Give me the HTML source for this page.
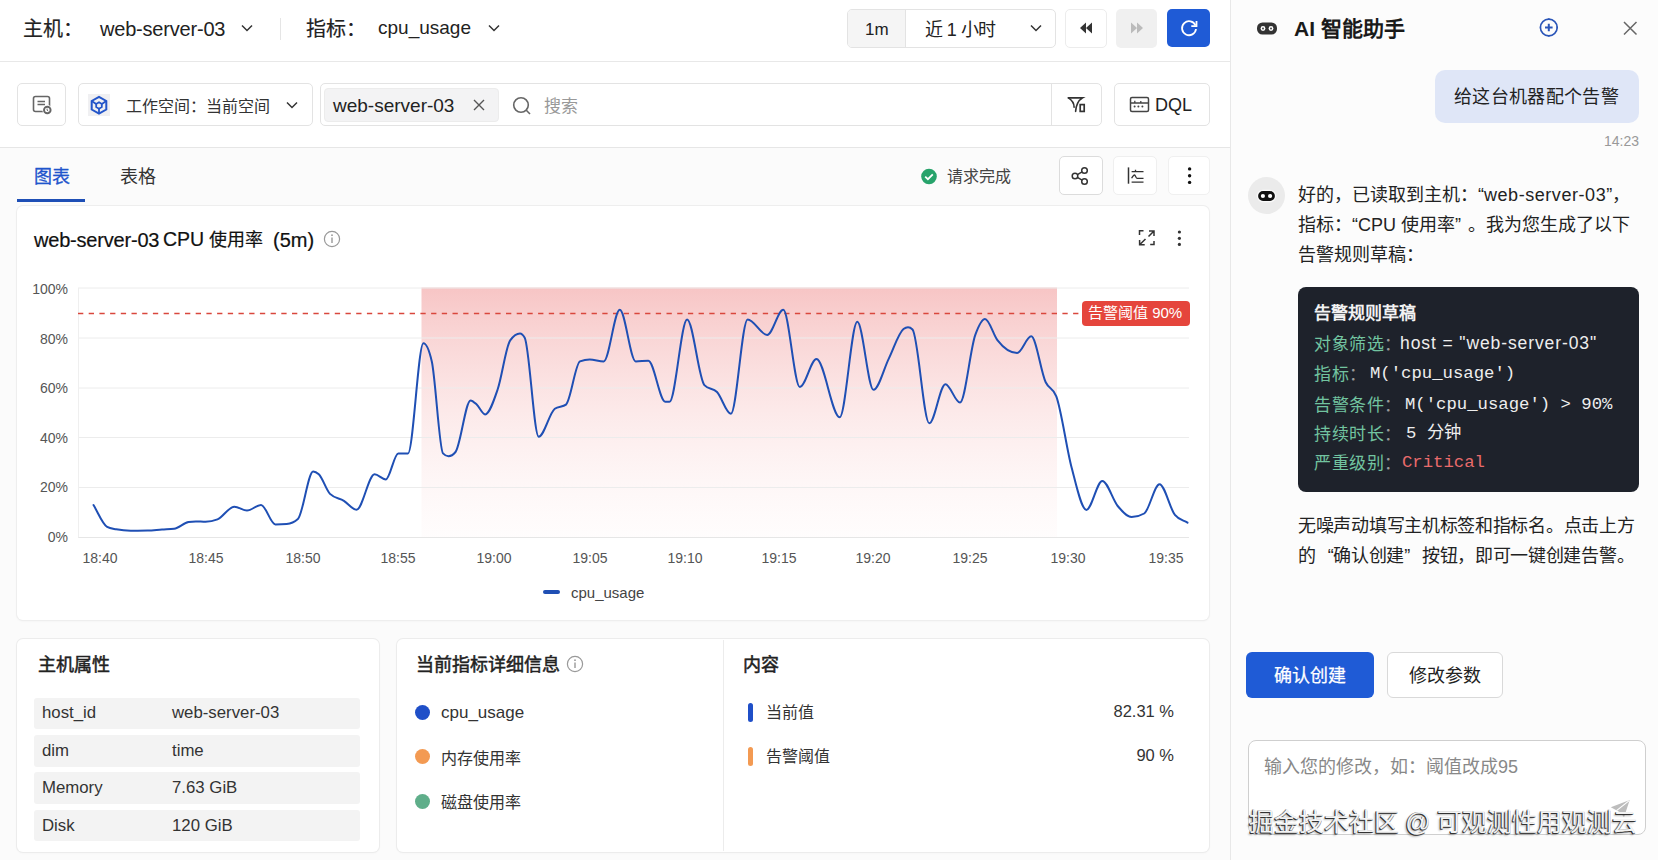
<!DOCTYPE html>
<html lang="zh-CN"><head><meta charset="utf-8">
<style>
*{box-sizing:border-box}
html,body{margin:0;padding:0}
body{width:1658px;height:860px;overflow:hidden;position:relative;background:#fbfbfb;font-family:"Liberation Sans",sans-serif;color:#222}
.a{position:absolute}
.t{position:absolute;white-space:nowrap;line-height:1}
.box{position:absolute;border:1px solid #e3e3e3;border-radius:5px;background:#fff}
svg{position:absolute;overflow:visible}
</style></head><body>
<!-- top bar -->
<div class="a" style="left:0;top:0;width:1230px;height:62px;background:#fff;border-bottom:1px solid #e8e8e8"></div>
<div class="t" style="left:23px;top:19px;font-size:20px;-webkit-text-stroke:0.2px #222;color:#222">主机：</div>
<div class="t" style="left:100px;top:19px;font-size:20px;letter-spacing:-0.2px;color:#222">web-server-03</div>
<svg style="left:240px;top:23px" width="14" height="10" viewBox="0 0 14 10"><path d="M2,2.5 L7,7.5 L12,2.5" fill="none" stroke="#333" stroke-width="1.5"/></svg>
<div class="a" style="left:280px;top:18px;width:1px;height:22px;background:#e5e5e5"></div>
<div class="t" style="left:306px;top:19px;font-size:20px;-webkit-text-stroke:0.2px #222;color:#222">指标：</div>
<div class="t" style="left:378px;top:18px;font-size:19px;color:#222">cpu_usage</div>
<svg style="left:487px;top:23px" width="14" height="10" viewBox="0 0 14 10"><path d="M2,2.5 L7,7.5 L12,2.5" fill="none" stroke="#333" stroke-width="1.5"/></svg>

<div class="box" style="left:847px;top:9px;width:209px;height:39px;border-radius:5px"></div>
<div class="a" style="left:848px;top:10px;width:58px;height:37px;background:#f5f5f5;border-right:1px solid #e3e3e3;border-radius:4px 0 0 4px"></div>
<div class="t" style="left:865px;top:21px;font-size:17px;color:#222">1m</div>
<div class="t" style="left:925px;top:21px;font-size:18px;letter-spacing:-0.6px;color:#222">近 1 小时</div>
<svg style="left:1029px;top:23px" width="14" height="10" viewBox="0 0 14 10"><path d="M2,2.5 L7,7.5 L12,2.5" fill="none" stroke="#333" stroke-width="1.5"/></svg>
<div class="box" style="left:1065px;top:9px;width:42px;height:39px;border-color:#ececec"></div>
<svg style="left:1078px;top:21px" width="16" height="14" viewBox="0 0 16 14"><path d="M8,1.5 L2,7 L8,12.5Z M14,1.5 L8,7 L14,12.5Z" fill="#333"/></svg>
<div class="a" style="left:1116px;top:9px;width:41px;height:39px;background:#f0f0f0;border-radius:5px"></div>
<svg style="left:1129px;top:21px" width="16" height="14" viewBox="0 0 16 14"><path d="M2,1.5 L8,7 L2,12.5Z M8,1.5 L14,7 L8,12.5Z" fill="#bbb"/></svg>
<div class="a" style="left:1167px;top:9px;width:43px;height:38px;background:#1f5bd6;border-radius:5px"></div>
<svg style="left:1178px;top:17px" width="22" height="22" viewBox="0 0 22 22"><path d="M17.5,8.5 A7,7 0 1 0 18,12" fill="none" stroke="#fff" stroke-width="1.8"/><path d="M18.5,4 L18.5,9.2 L13.3,9.2" fill="none" stroke="#fff" stroke-width="1.8"/></svg>

<!-- toolbar row -->
<div class="a" style="left:0;top:62px;width:1230px;height:86px;background:#fff;border-bottom:1px solid #e6e6e6"></div>
<div class="box" style="left:17px;top:83px;width:49px;height:43px"></div>
<svg style="left:30px;top:94px" width="24" height="22" viewBox="0 0 24 22"><rect x="3.5" y="2.5" width="16" height="15" rx="2" fill="none" stroke="#666" stroke-width="1.6"/><path d="M7.5,7.5 H15 M7.5,10.5 H15" stroke="#666" stroke-width="1.6"/><circle cx="17.3" cy="16" r="4.9" fill="#fff"/><circle cx="17.3" cy="16" r="3.3" fill="#fff" stroke="#666" stroke-width="1.9"/><path d="M17.1,14.6 V16.2 L18.3,17.2" fill="none" stroke="#666" stroke-width="1"/></svg>
<div class="box" style="left:78px;top:83px;width:235px;height:43px"></div>
<div class="a" style="left:88px;top:94px;width:22px;height:22px;background:#f0f0f2"></div>
<svg style="left:88px;top:94px" width="22" height="22" viewBox="0 0 22 22"><path d="M11,2.8 L18.3,7 L18.3,15.5 L11,19.7 L3.7,15.5 L3.7,7Z" fill="none" stroke="#2355c9" stroke-width="2"/><path d="M11,8.3 L13.8,9.9 L13.8,13.1 L11,14.7 L8.2,13.1 L8.2,9.9Z" fill="none" stroke="#2355c9" stroke-width="1.8"/><path d="M11,14.7 V19.7 M3.7,7 L8.2,9.9 M18.3,7 L13.8,9.9" stroke="#2355c9" stroke-width="1.8"/></svg>
<div class="t" style="left:126px;top:99px;font-size:16px;color:#333">工作空间：当前空间</div>
<svg style="left:285px;top:100px" width="14" height="10" viewBox="0 0 14 10"><path d="M2,2.5 L7,7.5 L12,2.5" fill="none" stroke="#333" stroke-width="1.5"/></svg>
<div class="box" style="left:320px;top:83px;width:782px;height:43px"></div>
<div class="a" style="left:1051px;top:84px;width:1px;height:41px;background:#e3e3e3"></div>
<div class="a" style="left:324px;top:88px;width:175px;height:34px;background:#f3f3f4;border-radius:4px;border:1px solid #ececec"></div>
<div class="t" style="left:333px;top:96px;font-size:19px;color:#222">web-server-03</div>
<svg style="left:471px;top:97px" width="16" height="16" viewBox="0 0 16 16"><path d="M3,3 L13,13 M13,3 L3,13" stroke="#555" stroke-width="1.4"/></svg>
<svg style="left:511px;top:95px" width="22" height="22" viewBox="0 0 22 22"><circle cx="10" cy="10" r="7.3" fill="none" stroke="#666" stroke-width="1.6"/><path d="M15.3,15.3 L19,19" stroke="#666" stroke-width="1.6"/></svg>
<div class="t" style="left:544px;top:98px;font-size:17px;color:#999">搜索</div>
<svg style="left:1066px;top:95px" width="22" height="20" viewBox="0 0 22 20"><path d="M2.4,2.9 H16.6 C12,5.5 10.2,9 9.6,16.4" fill="none" stroke="#333" stroke-width="1.6" stroke-linecap="round"/><path d="M2.4,2.9 C6.5,5.5 8.1,8.5 8.1,12.2" fill="none" stroke="#333" stroke-width="1.6" stroke-linecap="round"/><rect x="14.2" y="9.6" width="4" height="6.8" fill="none" stroke="#333" stroke-width="1.7"/></svg>
<div class="box" style="left:1114px;top:83px;width:96px;height:43px"></div>
<svg style="left:1129px;top:96px" width="21" height="17" viewBox="0 0 21 17"><rect x="1.5" y="1.5" width="18" height="14" rx="1.5" fill="none" stroke="#444" stroke-width="1.5"/><path d="M2,7 H19 M5.8,7 V4.8 M11.8,7 V5" stroke="#444" stroke-width="1.3"/><circle cx="5.6" cy="10.4" r="1" fill="#444"/><circle cx="9.4" cy="10.4" r="1" fill="#444"/><circle cx="13.4" cy="10.4" r="1" fill="#444"/></svg>
<div class="t" style="left:1155px;top:96px;font-size:18px;color:#222">DQL</div>

<!-- tabs row -->
<div class="t" style="left:34px;top:168px;font-size:18px;color:#1f55cc;-webkit-text-stroke:0.3px #1f55cc">图表</div>
<div class="t" style="left:120px;top:168px;font-size:18px;color:#333">表格</div>
<div class="a" style="left:17px;top:199px;width:68px;height:3px;background:#1e4fb6"></div>
<svg style="left:920px;top:168px" width="18" height="18" viewBox="0 0 18 18"><circle cx="9" cy="8.5" r="7.8" fill="#27a36b"/><path d="M5.2,8.7 L7.9,11.2 L12.8,6.3" fill="none" stroke="#fff" stroke-width="1.8"/></svg>
<div class="t" style="left:947px;top:169px;font-size:16px;color:#444">请求完成</div>
<div class="box" style="left:1059px;top:156px;width:44px;height:39px;border-color:#dcdcdc"></div>
<svg style="left:1070px;top:166px" width="20" height="20" viewBox="0 0 20 20"><circle cx="14.5" cy="4.5" r="2.8" fill="none" stroke="#333" stroke-width="1.5"/><circle cx="5" cy="10" r="2.8" fill="none" stroke="#333" stroke-width="1.5"/><circle cx="14.5" cy="15.5" r="2.8" fill="none" stroke="#333" stroke-width="1.5"/><path d="M7.4,8.6 L12.1,5.9 M7.4,11.4 L12.1,14.1" stroke="#333" stroke-width="1.5"/></svg>
<div class="box" style="left:1113px;top:156px;width:44px;height:39px;border-color:#efefef"></div>
<svg style="left:1125px;top:166px" width="20" height="20" viewBox="0 0 20 20"><path d="M3.5,1.4 V17.7" stroke="#333" stroke-width="1.5"/><path d="M6.6,5.6 H18.5 M10.5,3.8 V5.6 M6.6,16.2 H18.5" stroke="#333" stroke-width="1.3"/><path d="M6.6,12.3 C7.8,10.2 8.6,8.9 9.5,9 C10.5,9.1 10.8,12.3 12,12.3 H18.5" fill="none" stroke="#333" stroke-width="1.3"/></svg>
<div class="box" style="left:1168px;top:156px;width:42px;height:39px;border-color:#f0f0f0"></div>
<svg style="left:1184px;top:164px" width="10" height="24" viewBox="0 0 10 24"><circle cx="5.6" cy="4.9" r="1.7" fill="#111"/><circle cx="5.6" cy="11.7" r="1.7" fill="#111"/><circle cx="5.6" cy="18.4" r="1.7" fill="#111"/></svg>

<!-- chart card -->
<div class="a" style="left:17px;top:206px;width:1192px;height:414px;background:#fff;border-radius:6px;box-shadow:0 0 0 1px #eeeeee,0 1px 3px rgba(0,0,0,0.05)"></div>
<div class="t" style="left:34px;top:230px;font-size:20px;letter-spacing:-0.2px;color:#111;-webkit-text-stroke:0.2px #111">web-server-03</div>
<div class="t" style="left:163px;top:230px;font-size:19.5px;color:#111;-webkit-text-stroke:0.2px #111">CPU</div>
<div class="t" style="left:209px;top:231px;font-size:18px;color:#111;-webkit-text-stroke:0.2px #111">使用率</div>
<div class="t" style="left:273px;top:230px;font-size:20px;color:#111;-webkit-text-stroke:0.2px #111">(5m)</div>
<svg style="left:322px;top:229px" width="20" height="20" viewBox="0 0 20 20"><circle cx="10" cy="10" r="7.6" fill="none" stroke="#999" stroke-width="1.2"/><path d="M10,8.5 V14" stroke="#999" stroke-width="1.4"/><circle cx="10" cy="6.2" r="0.9" fill="#999"/></svg>
<svg style="left:1130px;top:222px" width="65" height="32" viewBox="1130 222 65 32"><path d="M1139.5,235 V230.8 H1143.5 M1149,231 H1154 V236 M1154,231 L1148.5,236.5 M1144.7,244.8 H1139.6 V240 M1139.6,244.8 L1145.5,239 M1150.2,244.5 H1154 V241" fill="none" stroke="#333" stroke-width="1.5"/></svg>
<svg style="left:1174px;top:228px" width="10" height="20" viewBox="0 0 10 20"><circle cx="5.4" cy="4" r="1.6" fill="#333"/><circle cx="5.4" cy="10.3" r="1.6" fill="#333"/><circle cx="5.4" cy="16.4" r="1.6" fill="#333"/></svg>

<svg style="left:0;top:0" width="1658" height="860">
<defs><linearGradient id="g" x1="0" y1="0" x2="0" y2="1"><stop offset="0" stop-color="#f7c5c5"/><stop offset="1" stop-color="#fdeeee" stop-opacity="0.15"/></linearGradient></defs>
<rect x="421.5" y="287.5" width="635.5" height="250" fill="url(#g)"/>
<g stroke="#ececec" stroke-width="1"><path d="M78,288 H1189 M78,338 H1189 M78,388 H1189 M78,437.5 H1189 M78,487.5 H1189"/></g>
<path d="M78,537.5 H1189" stroke="#e6e6e6" stroke-width="1"/>
<path d="M78.5,288 V537.5" stroke="#efefef" stroke-width="1"/>
<path d="M78,313.5 H1082" stroke="#d9473d" stroke-width="1.4" stroke-dasharray="5.3 5.4"/>
<path d="M93.5,505.1 C98.0,512.4 102.6,524.5 107.1,526.9 C110.1,528.5 113.2,528.7 116.2,529.3 C121.0,530.2 125.9,530.7 130.7,530.7 C136.3,530.7 142.0,530.6 147.6,530.5 C152.4,530.4 157.2,529.8 162.0,529.5 C166.0,529.2 170.1,529.2 174.1,528.7 C178.9,528.1 183.8,522.8 188.6,522.0 C191.0,521.6 193.4,521.4 195.8,521.4 C199.0,521.4 202.3,521.8 205.5,521.8 C209.5,521.8 213.5,521.0 217.5,519.4 C223.1,517.1 228.8,506.7 234.4,506.7 C238.6,506.7 242.8,510.6 247.0,510.6 C251.7,510.6 256.3,504.9 261.0,504.9 C265.8,504.9 270.6,524.4 275.4,524.4 C279.2,524.4 282.9,524.3 286.7,524.0 C290.4,523.7 294.2,522.3 297.9,519.0 C303.0,514.4 308.1,471.5 313.2,471.5 C315.1,471.5 316.9,472.6 318.8,474.3 C322.5,477.7 326.3,490.2 330.0,493.9 C334.6,498.5 339.3,498.0 343.9,500.8 C348.1,503.4 352.3,509.8 356.5,509.8 C362.5,509.8 368.6,474.3 374.6,474.3 C378.3,474.3 382.1,479.4 385.8,479.4 C390.0,479.4 394.1,453.4 398.3,453.4 C401.5,453.4 404.8,453.4 408.0,453.4 C413.1,453.4 418.3,343.2 423.4,343.2 C426.2,343.2 429.0,349.3 431.8,361.4 C435.5,377.6 439.3,449.6 443.0,453.4 C444.8,455.3 446.7,456.2 448.5,456.2 C450.8,456.2 453.2,454.8 455.5,452.0 C460.5,446.0 465.6,400.4 470.6,400.4 C472.6,400.4 474.7,402.8 476.7,404.6 C479.5,407.1 482.3,414.4 485.1,414.4 C489.3,414.4 493.5,401.7 497.7,389.3 C501.9,377.0 506.0,346.3 510.2,340.4 C513.5,335.8 516.7,333.5 520.0,333.5 C521.6,333.5 523.1,334.9 524.7,337.7 C529.4,346.0 534.0,436.7 538.7,436.7 C544.1,436.7 549.4,412.8 554.8,408.8 C558.5,406.0 562.3,407.4 566.0,404.6 C570.7,401.1 575.3,363.3 580.0,361.4 C583.2,360.1 586.5,359.4 589.7,359.4 C594.4,359.4 599.0,361.4 603.7,361.4 C609.1,361.4 614.4,309.8 619.8,309.8 C625.1,309.8 630.4,361.4 635.7,361.4 C639.9,361.4 644.1,360.8 648.3,360.8 C654.0,360.8 659.6,401.8 665.3,401.8 C666.7,401.8 668.1,401.8 669.5,401.8 C675.4,401.8 681.2,319.5 687.1,319.5 C692.9,319.5 698.6,378.8 704.4,385.1 C708.6,389.7 712.8,387.7 717.0,392.0 C721.6,396.8 726.3,413.8 730.9,413.8 C736.5,413.8 742.0,319.5 747.6,319.5 C754.1,319.5 760.7,334.9 767.2,334.9 C772.6,334.9 777.9,309.8 783.3,309.8 C788.8,309.8 794.3,387.0 799.8,387.0 C805.4,387.0 810.9,359.1 816.5,359.1 C824.2,359.1 832.0,417.2 839.7,417.2 C845.6,417.2 851.4,321.8 857.3,321.8 C862.7,321.8 868.1,389.8 873.5,389.8 C878.6,389.8 883.7,368.9 888.8,358.6 C893.7,348.7 898.6,332.7 903.5,329.0 C905.0,327.9 906.5,327.3 908.0,327.3 C909.5,327.3 911.0,328.0 912.5,329.5 C918.1,335.0 923.7,423.3 929.3,423.3 C934.7,423.3 940.0,384.2 945.4,384.2 C950.3,384.2 955.1,402.6 960.0,402.6 C965.1,402.6 970.2,348.8 975.3,334.9 C978.5,326.1 981.8,319.0 985.0,319.0 C989.2,319.0 993.4,335.0 997.6,340.4 C1004.1,348.8 1010.6,353.0 1017.1,353.0 C1021.8,353.0 1026.5,336.3 1031.2,336.3 C1036.0,336.3 1040.9,372.1 1045.7,382.3 C1049.2,389.7 1052.8,387.0 1056.3,396.3 C1061.4,409.8 1066.5,448.4 1071.6,467.5 C1076.5,486.0 1081.5,509.9 1086.4,509.9 C1091.7,509.9 1097.0,480.9 1102.3,480.9 C1107.4,480.9 1112.6,499.9 1117.7,506.0 C1122.3,511.5 1127.0,517.1 1131.6,517.1 C1135.8,517.1 1140.0,515.9 1144.2,513.5 C1149.3,510.6 1154.4,484.2 1159.5,484.2 C1164.6,484.2 1169.8,508.5 1174.9,514.9 C1179.1,520.1 1183.3,520.1 1187.5,522.7" fill="none" stroke="#1f4fb4" stroke-width="2" stroke-linejoin="round" stroke-linecap="round"/>
</svg>
<div class="a" style="left:1082px;top:301px;width:108px;height:25px;background:#e5453c;border-radius:4px"></div>
<div class="t" style="left:1088px;top:305px;font-size:15px;color:#fff">告警阈值 90%</div>
<div class="t" style="left:30px;top:282px;width:38px;text-align:right;font-size:14px;color:#555">100%</div>
<div class="t" style="left:30px;top:332px;width:38px;text-align:right;font-size:14px;color:#555">80%</div>
<div class="t" style="left:30px;top:381px;width:38px;text-align:right;font-size:14px;color:#555">60%</div>
<div class="t" style="left:30px;top:431px;width:38px;text-align:right;font-size:14px;color:#555">40%</div>
<div class="t" style="left:30px;top:480px;width:38px;text-align:right;font-size:14px;color:#555">20%</div>
<div class="t" style="left:30px;top:530px;width:38px;text-align:right;font-size:14px;color:#555">0%</div>
<div class="t" style="left:60px;top:551px;width:80px;text-align:center;font-size:14px;color:#555">18:40</div>
<div class="t" style="left:166px;top:551px;width:80px;text-align:center;font-size:14px;color:#555">18:45</div>
<div class="t" style="left:263px;top:551px;width:80px;text-align:center;font-size:14px;color:#555">18:50</div>
<div class="t" style="left:358px;top:551px;width:80px;text-align:center;font-size:14px;color:#555">18:55</div>
<div class="t" style="left:454px;top:551px;width:80px;text-align:center;font-size:14px;color:#555">19:00</div>
<div class="t" style="left:550px;top:551px;width:80px;text-align:center;font-size:14px;color:#555">19:05</div>
<div class="t" style="left:645px;top:551px;width:80px;text-align:center;font-size:14px;color:#555">19:10</div>
<div class="t" style="left:739px;top:551px;width:80px;text-align:center;font-size:14px;color:#555">19:15</div>
<div class="t" style="left:833px;top:551px;width:80px;text-align:center;font-size:14px;color:#555">19:20</div>
<div class="t" style="left:930px;top:551px;width:80px;text-align:center;font-size:14px;color:#555">19:25</div>
<div class="t" style="left:1028px;top:551px;width:80px;text-align:center;font-size:14px;color:#555">19:30</div>
<div class="t" style="left:1126px;top:551px;width:80px;text-align:center;font-size:14px;color:#555">19:35</div>
<div class="a" style="left:542.5px;top:590.2px;width:17.5px;height:4.2px;background:#1f4fb4;border-radius:2px"></div>
<div class="t" style="left:571px;top:585px;font-size:15px;color:#444">cpu_usage</div>

<!-- host card -->
<div class="a" style="left:17px;top:639px;width:362px;height:213px;background:#fff;border-radius:6px;box-shadow:0 0 0 1px #ececec,0 1px 3px rgba(0,0,0,0.04)"></div>
<div class="t" style="left:38px;top:656px;font-size:18px;color:#222;-webkit-text-stroke:0.5px #222">主机属性</div>
<div class="a" style="left:34px;top:698px;width:326px;height:31px;background:#f3f3f3;border-radius:3px"></div>
<div class="a" style="left:34px;top:735px;width:326px;height:32px;background:#f3f3f3;border-radius:3px"></div>
<div class="a" style="left:34px;top:772px;width:326px;height:32px;background:#f3f3f3;border-radius:3px"></div>
<div class="a" style="left:34px;top:810px;width:326px;height:31px;background:#f3f3f3;border-radius:3px"></div>
<div class="t" style="left:42px;top:705px;font-size:16.8px;color:#333">host_id</div>
<div class="t" style="left:172px;top:705px;font-size:16.8px;color:#333">web-server-03</div>
<div class="t" style="left:42px;top:743px;font-size:16.8px;color:#333">dim</div>
<div class="t" style="left:172px;top:743px;font-size:16.8px;color:#333">time</div>
<div class="t" style="left:42px;top:780px;font-size:16.8px;color:#333">Memory</div>
<div class="t" style="left:172px;top:780px;font-size:16.8px;color:#333">7.63 GiB</div>
<div class="t" style="left:42px;top:818px;font-size:16.8px;color:#333">Disk</div>
<div class="t" style="left:172px;top:818px;font-size:16.8px;color:#333">120 GiB</div>

<!-- metric card -->
<div class="a" style="left:397px;top:639px;width:812px;height:213px;background:#fff;border-radius:6px;box-shadow:0 0 0 1px #ececec,0 1px 3px rgba(0,0,0,0.04)"></div>
<div class="a" style="left:723px;top:640px;width:1px;height:211px;background:#ececec"></div>
<div class="t" style="left:416px;top:656px;font-size:18px;color:#222;-webkit-text-stroke:0.5px #222">当前指标详细信息</div>
<svg style="left:565px;top:654px" width="20" height="20" viewBox="0 0 20 20"><circle cx="10" cy="10" r="7.6" fill="none" stroke="#999" stroke-width="1.2"/><path d="M10,8.5 V14" stroke="#999" stroke-width="1.4"/><circle cx="10" cy="6.2" r="0.9" fill="#999"/></svg>
<div class="a" style="left:415px;top:705px;width:15px;height:15px;border-radius:50%;background:#1f4fc8"></div>
<div class="a" style="left:415px;top:749px;width:15px;height:15px;border-radius:50%;background:#f39a52"></div>
<div class="a" style="left:415px;top:794px;width:15px;height:15px;border-radius:50%;background:#5fae8a"></div>
<div class="t" style="left:441px;top:704px;font-size:17px;color:#333">cpu_usage</div>
<div class="t" style="left:441px;top:751px;font-size:16px;color:#333">内存使用率</div>
<div class="t" style="left:441px;top:795px;font-size:16px;color:#333">磁盘使用率</div>
<div class="t" style="left:743px;top:656px;font-size:18px;color:#222;-webkit-text-stroke:0.5px #222">内容</div>
<div class="a" style="left:748px;top:703px;width:5px;height:19px;border-radius:3px;background:#1f4fc8"></div>
<div class="a" style="left:748px;top:747px;width:5px;height:19px;border-radius:3px;background:#f39a52"></div>
<div class="t" style="left:766px;top:705px;font-size:16px;color:#333">当前值</div>
<div class="t" style="left:766px;top:749px;font-size:16px;color:#333">告警阈值</div>
<div class="t" style="left:1074px;top:703px;width:100px;text-align:right;font-size:16.5px;color:#333">82.31 %</div>
<div class="t" style="left:1074px;top:747px;width:100px;text-align:right;font-size:16.5px;color:#333">90 %</div>

<!-- right panel -->
<div class="a" style="left:1230px;top:0;width:428px;height:860px;background:#fcfcfc;border-left:1px solid #e8e8e8"></div>
<svg style="left:1256px;top:21px" width="22" height="15" viewBox="0 0 22 15"><rect x="1" y="1.5" width="20" height="12" rx="5.5" fill="#333"/><circle cx="7" cy="7.5" r="2.4" fill="#fff"/><circle cx="15" cy="7.5" r="2.4" fill="#fff"/><circle cx="7" cy="7.5" r="0.9" fill="#333"/><circle cx="15" cy="7.5" r="0.9" fill="#333"/></svg>
<div class="t" style="left:1294px;top:18px;font-size:21px;font-weight:bold;color:#1a1a1a">AI 智能助手</div>
<svg style="left:1538px;top:18px" width="22" height="22" viewBox="0 0 22 22"><circle cx="10.8" cy="9.5" r="8.4" fill="none" stroke="#2a55b8" stroke-width="1.6"/><path d="M10.8,5.7 V13.3 M7,9.5 H14.6" stroke="#2a55b8" stroke-width="2"/><path d="M10.8,0.6 V1.8 M10.8,17.2 V18.4 M1.9,9.5 H3.1 M18.5,9.5 H19.7" stroke="#2a55b8" stroke-width="1.8"/></svg>
<svg style="left:1621px;top:19px" width="18" height="18" viewBox="0 0 18 18"><path d="M3,3 L15.5,15.5 M15.5,3 L3,15.5" stroke="#666" stroke-width="1.5"/></svg>
<div class="a" style="left:1435px;top:70px;width:204px;height:53px;background:#dfe6f7;border-radius:10px"></div>
<div class="t" style="left:1454px;top:88px;font-size:18px;letter-spacing:0.35px;color:#222">给这台机器配个告警</div>
<div class="t" style="left:1604px;top:134px;font-size:14px;color:#999">14:23</div>
<div class="a" style="left:1248px;top:177px;width:37px;height:37px;border-radius:50%;background:#ebebeb"></div>
<svg style="left:1256px;top:189px" width="22" height="15" viewBox="0 0 22 15"><rect x="1.4" y="1.4" width="18.2" height="11.2" rx="5.6" fill="#111" stroke="#fafafa" stroke-width="1.4"/><circle cx="6.9" cy="7" r="2.1" fill="#fff"/><circle cx="14.1" cy="7" r="2.1" fill="#fff"/></svg>
<div class="t" style="left:1298px;top:186px;font-size:18px;color:#222">好的，已读取到主机：</div>
<div class="t" style="left:1478px;top:186px;font-size:18px;color:#222">“<span style="letter-spacing:0.55px">web-server-03</span>”，</div>
<div class="t" style="left:1298px;top:216px;font-size:18px;color:#222">指标：</div>
<div class="t" style="left:1352px;top:216px;font-size:18px;color:#222">“CPU 使用率”</div>
<div class="t" style="left:1468px;top:216px;font-size:18px;color:#222">。我为您生成了以下</div>
<div class="t" style="left:1298px;top:246px;font-size:18px;color:#222">告警规则草稿：</div>
<div class="a" style="left:1298px;top:287px;width:341px;height:205px;background:#1e222b;border-radius:8px"></div>
<div class="t" style="left:1314px;top:305px;font-size:17px;font-weight:bold;color:#f2f2f2">告警规则草稿</div>
<div class="t" style="left:1314px;top:336px;font-size:17px;color:#72c4a0;letter-spacing:0.6px">对象筛选<span style="color:#9a9a9a">：</span></div>
<div class="t" style="left:1400px;top:335px;font-size:17.5px;color:#eee;letter-spacing:0.9px">host = "web-server-03"</div>
<div class="t" style="left:1314px;top:366px;font-size:17px;color:#72c4a0;letter-spacing:0.6px">指标<span style="color:#9a9a9a">：</span></div>
<div class="t" style="left:1370px;top:365px;font-size:17.3px;font-family:'Liberation Mono',monospace;color:#eee">M('cpu_usage')</div>
<div class="t" style="left:1314px;top:397px;font-size:17px;color:#72c4a0;letter-spacing:0.6px">告警条件<span style="color:#9a9a9a">：</span></div>
<div class="t" style="left:1405px;top:396px;font-size:17.3px;font-family:'Liberation Mono',monospace;color:#eee">M('cpu_usage') &gt; 90%</div>
<div class="t" style="left:1314px;top:426px;font-size:17px;color:#72c4a0;letter-spacing:0.6px">持续时长<span style="color:#9a9a9a">：</span></div>
<div class="t" style="left:1406px;top:425px;font-size:17.3px;font-family:'Liberation Mono',monospace;color:#eee">5 分钟</div>
<div class="t" style="left:1314px;top:455px;font-size:17px;color:#72c4a0;letter-spacing:0.6px">严重级别<span style="color:#9a9a9a">：</span></div>
<div class="t" style="left:1402px;top:454px;font-size:17.3px;font-family:'Liberation Mono',monospace;color:#e86b6b">Critical</div>
<div class="t" style="left:1298px;top:517px;font-size:18px;letter-spacing:-0.3px;color:#222">无噪声动填写主机标签和指标名。点击上方</div>
<div class="t" style="left:1298px;top:547px;font-size:18px;letter-spacing:-0.3px;color:#222">的<span style="display:inline-block;width:17.7px;text-align:right">“</span>确认创建<span style="display:inline-block;width:17.7px;text-align:left">”</span>按钮，即可一键创建告警。</div>
<div class="a" style="left:1246px;top:652px;width:128px;height:46px;background:#1f5bd6;border-radius:6px"></div>
<div class="t" style="left:1246px;top:667px;width:128px;text-align:center;font-size:18px;color:#fff;-webkit-text-stroke:0.25px #fff">确认创建</div>
<div class="a" style="left:1387px;top:652px;width:116px;height:46px;background:#fff;border:1px solid #d9d9d9;border-radius:6px"></div>
<div class="t" style="left:1387px;top:667px;width:116px;text-align:center;font-size:18px;color:#222">修改参数</div>
<div class="a" style="left:1248px;top:740px;width:398px;height:95px;background:#fff;border:1px solid #cfcfcf;border-radius:8px"></div>
<div class="t" style="left:1264px;top:758px;font-size:18px;color:#888">输入您的修改，如：阈值改成95</div>
<svg style="left:1608px;top:798px" width="24" height="22" viewBox="0 0 24 22"><path d="M2.8,9.3 L21.7,1.9 L16,19.3 L12.5,14.5 Z" fill="#bdbdbd"/><path d="M8.5,12.6 L21.2,2.6" stroke="#fff" stroke-width="1.2"/></svg>
<div class="t" style="left:1249px;top:810px;font-size:25px;letter-spacing:-0.1px;color:#f4f4f4;text-shadow:-1px 1px 0 #333,-1px 0 0 #777,0 1px 0 #777,-2px 2px 2px rgba(0,0,0,0.3)">掘金技术社区 @ 可观测性用观测云</div>
</body></html>
